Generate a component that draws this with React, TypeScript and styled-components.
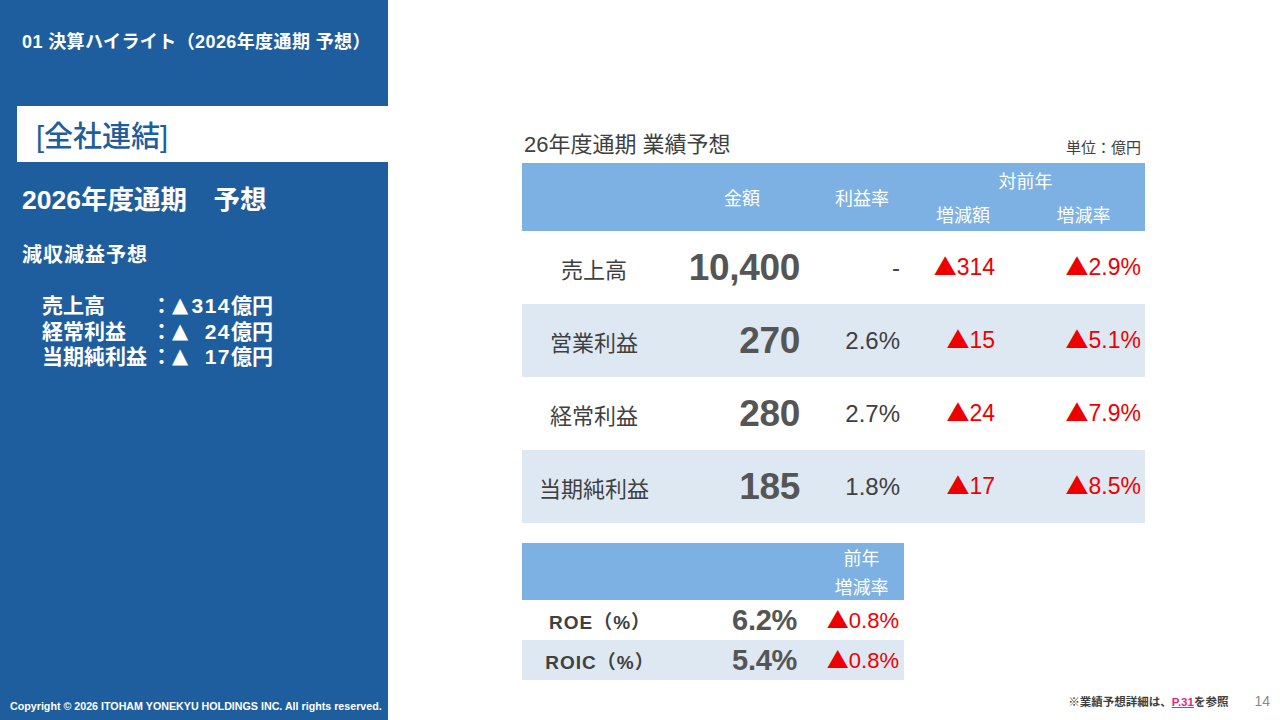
import React from "react";
import styled, { createGlobalStyle } from "styled-components";

const GlobalStyle = createGlobalStyle`
  html, body { margin: 0; padding: 0; background: #ffffff; }
  body { font-family: "Liberation Sans", "Noto Sans CJK JP", sans-serif; }
  * { box-sizing: border-box; }
`;

const JP = `"Liberation Sans", "Noto Sans CJK JP", sans-serif`;

const Slide = styled.div`
  width: 1280px;
  height: 720px;
  display: flex;
  overflow: hidden;
  font-family: ${JP};
`;

const Sidebar = styled.aside`
  width: 388px;
  flex: none;
  background: #1f5e9e;
  color: #ffffff;
  display: flex;
  flex-direction: column;
  padding-top: 30px;
`;

const SectionTitle = styled.div`
  font-size: 18px;
  line-height: 24px;
  font-weight: 700;
  padding-left: 22px;
  letter-spacing: 0.4px;
  white-space: nowrap;
`;

const ScopeBand = styled.div`
  margin: 52px 0 0 17px;
  height: 56px;
  background: #ffffff;
  color: #1f5e9e;
  display: flex;
  align-items: center;
  padding-left: 19px;
  font-size: 29px;
  font-weight: 500;
`;

const Heading = styled.div`
  margin-top: 22px;
  padding-left: 22px;
  font-size: 26.5px;
  line-height: 32px;
  font-weight: 700;
`;

const SubHeading = styled.div`
  margin-top: 27px;
  padding-left: 22px;
  font-size: 20px;
  line-height: 24px;
  font-weight: 700;
  letter-spacing: 1px;
`;

const Summary = styled.div`
  margin-top: 26px;
  padding-left: 42px;
  display: grid;
  grid-template-columns: 109px 21px 19px 40px auto;
  grid-auto-rows: 25.5px;
  align-items: center;
  font-size: 21px;
  line-height: 25px;
  font-weight: 700;
`;

const SumCell = styled.span<{ $num?: boolean }>`
  text-align: ${(p) => (p.$num ? "right" : "left")};
  letter-spacing: ${(p) => (p.$num ? "1.5px" : "0")};
  white-space: nowrap;
`;

const SumTri = styled.span`
  font-family: "DejaVu Sans", sans-serif;
  font-size: 21px;
  line-height: 1;
`;

const Tri = styled.span`
  font-family: "Noto Sans CJK JP", sans-serif;
  line-height: 1;
`;

const Copyright = styled.div`
  margin-top: auto;
  padding: 0 0 7px 10px;
  font-size: 10.7px;
  line-height: 14px;
  font-weight: 700;
  white-space: nowrap;
`;

const Main = styled.main`
  flex: 1;
  display: flex;
  flex-direction: column;
  padding: 132px 0 0 134px;
`;

const TitleRow = styled.div`
  width: 623px;
  display: flex;
  justify-content: space-between;
  align-items: flex-end;
  padding: 0 4px 0 2px;
  margin-bottom: 5px;
`;

const TableTitle = styled.div`
  font-size: 22px;
  line-height: 26px;
  color: #404040;
  font-weight: 400;
`;

const Unit = styled.div`
  font-size: 15px;
  line-height: 20px;
  color: #404040;
`;

const mainCols = "144px 140px 100px 94px 145px";
const kpiCols = "156px 125px 101px";

const Table = styled.div<{ $w: number }>`
  width: ${(p) => p.$w}px;
  display: flex;
  flex-direction: column;
`;

const HeadRow = styled.div<{ $cols: string; $h: number }>`
  display: grid;
  grid-template-columns: ${(p) => p.$cols};
  grid-template-rows: repeat(2, ${(p) => p.$h / 2}px);
  background: #7db1e3;
  color: #ffffff;
  font-size: 18px;
`;

const HeadCell = styled.div<{ $col: string; $row: string; $shift?: number }>`
  grid-column: ${(p) => p.$col};
  grid-row: ${(p) => p.$row};
  display: flex;
  align-items: center;
  justify-content: center;
  padding-left: ${(p) => p.$shift ?? 0}px;
  white-space: nowrap;
`;

const BodyRow = styled.div<{ $cols: string; $h: number; $shaded?: boolean }>`
  display: grid;
  grid-template-columns: ${(p) => p.$cols};
  height: ${(p) => p.$h}px;
  align-items: center;
  background: ${(p) => (p.$shaded ? "#dde8f3" : "#ffffff")};
`;

const Label = styled.div<{ $bold?: boolean; $size: number }>`
  text-align: center;
  font-size: ${(p) => p.$size}px;
  font-weight: ${(p) => (p.$bold ? 700 : 400)};
  letter-spacing: ${(p) => (p.$bold ? "1px" : "0")};
  color: #404040;
  white-space: nowrap;
`;

const Num = styled.div<{ $size: number; $bold?: boolean; $red?: boolean; $pad: number }>`
  text-align: right;
  padding-right: ${(p) => p.$pad}px;
  font-size: ${(p) => p.$size}px;
  font-weight: ${(p) => (p.$bold ? 700 : 400)};
  color: ${(p) => (p.$red ? "#ee0000" : p.$bold ? "#555555" : "#404040")};
  white-space: nowrap;
  letter-spacing: ${(p) => (p.$bold ? "-0.3px" : "0")};
`;

const KpiTable = styled(Table)`
  margin-top: 20px;
`;

const Footer = styled.div`
  margin-top: auto;
  margin-left: -134px;
  display: flex;
  justify-content: flex-end;
  align-items: center;
  gap: 26px;
  padding: 0 10px 11px 0;
`;

const Note = styled.div`
  font-size: 11.5px;
  font-weight: 700;
  color: #404040;
`;

const PageLink = styled.span`
  color: #e2267f;
  text-decoration: underline;
`;

const PageNo = styled.div`
  font-size: 14px;
  color: #8a8a8a;
`;

const Delta = ({ v }: { v: string }) => (
  <>
    <Tri>▲</Tri>
    {v}
  </>
);

const rows = [
  { label: "売上高", value: "10,400", ratio: "-", diff: "314", rate: "2.9%" },
  { label: "営業利益", value: "270", ratio: "2.6%", diff: "15", rate: "5.1%" },
  { label: "経常利益", value: "280", ratio: "2.7%", diff: "24", rate: "7.9%" },
  { label: "当期純利益", value: "185", ratio: "1.8%", diff: "17", rate: "8.5%" },
];

const kpis = [
  { label: "ROE（%）", value: "6.2%", rate: "0.8%" },
  { label: "ROIC（%）", value: "5.4%", rate: "0.8%" },
];

const summary = [
  { label: "売上高", num: "314" },
  { label: "経常利益", num: "24" },
  { label: "当期純利益", num: "17" },
];

export default function App() {
  return (
    <>
      <GlobalStyle />
      <Slide>
        <Sidebar>
          <SectionTitle>01 決算ハイライト（2026年度通期 予想）</SectionTitle>
          <ScopeBand>[全社連結]</ScopeBand>
          <Heading>2026年度通期　予想</Heading>
          <SubHeading>減収減益予想</SubHeading>
          <Summary>
            {summary.map((s) => (
              <React.Fragment key={s.label}>
                <SumCell>{s.label}</SumCell>
                <SumCell>：</SumCell>
                <SumTri>▲</SumTri>
                <SumCell $num>{s.num}</SumCell>
                <SumCell>億円</SumCell>
              </React.Fragment>
            ))}
          </Summary>
          <Copyright>Copyright © 2026 ITOHAM YONEKYU HOLDINGS INC. All rights reserved.</Copyright>
        </Sidebar>

        <Main>
          <TitleRow>
            <TableTitle>26年度通期 業績予想</TableTitle>
            <Unit>単位：億円</Unit>
          </TitleRow>
          <Table $w={623}>
            <HeadRow $cols={mainCols} $h={68}>
              <HeadCell $col="2" $row="1 / 3" $shift={12}>金額</HeadCell>
              <HeadCell $col="3" $row="1 / 3" $shift={12}>利益率</HeadCell>
              <HeadCell $col="4 / 6" $row="1">対前年</HeadCell>
              <HeadCell $col="4" $row="2" $shift={20}>増減額</HeadCell>
              <HeadCell $col="5" $row="2" $shift={22}>増減率</HeadCell>
            </HeadRow>
            {rows.map((r, i) => (
              <BodyRow key={r.label} $cols={mainCols} $h={73} $shaded={i % 2 === 1}>
                <Label $size={22}>{r.label}</Label>
                <Num $size={37} $bold $pad={6}>{r.value}</Num>
                <Num $size={24} $pad={6}>{r.ratio}</Num>
                <Num $size={23} $red $pad={5}><Delta v={r.diff} /></Num>
                <Num $size={23} $red $pad={4}><Delta v={r.rate} /></Num>
              </BodyRow>
            ))}
          </Table>

          <KpiTable $w={382}>
            <HeadRow $cols={kpiCols} $h={57}>
              <HeadCell $col="3" $row="1" $shift={16}>前年</HeadCell>
              <HeadCell $col="3" $row="2" $shift={16}>増減率</HeadCell>
            </HeadRow>
            {kpis.map((k, i) => (
              <BodyRow key={k.label} $cols={kpiCols} $h={40} $shaded={i % 2 === 1}>
                <Label $size={19} $bold>{k.label}</Label>
                <Num $size={29} $bold $pad={6}>{k.value}</Num>
                <Num $size={22} $red $pad={5}><Delta v={k.rate} /></Num>
              </BodyRow>
            ))}
          </KpiTable>

          <Footer>
            <Note>
              ※業績予想詳細は、<PageLink>P.31</PageLink>を参照
            </Note>
            <PageNo>14</PageNo>
          </Footer>
        </Main>
      </Slide>
    </>
  );
}
